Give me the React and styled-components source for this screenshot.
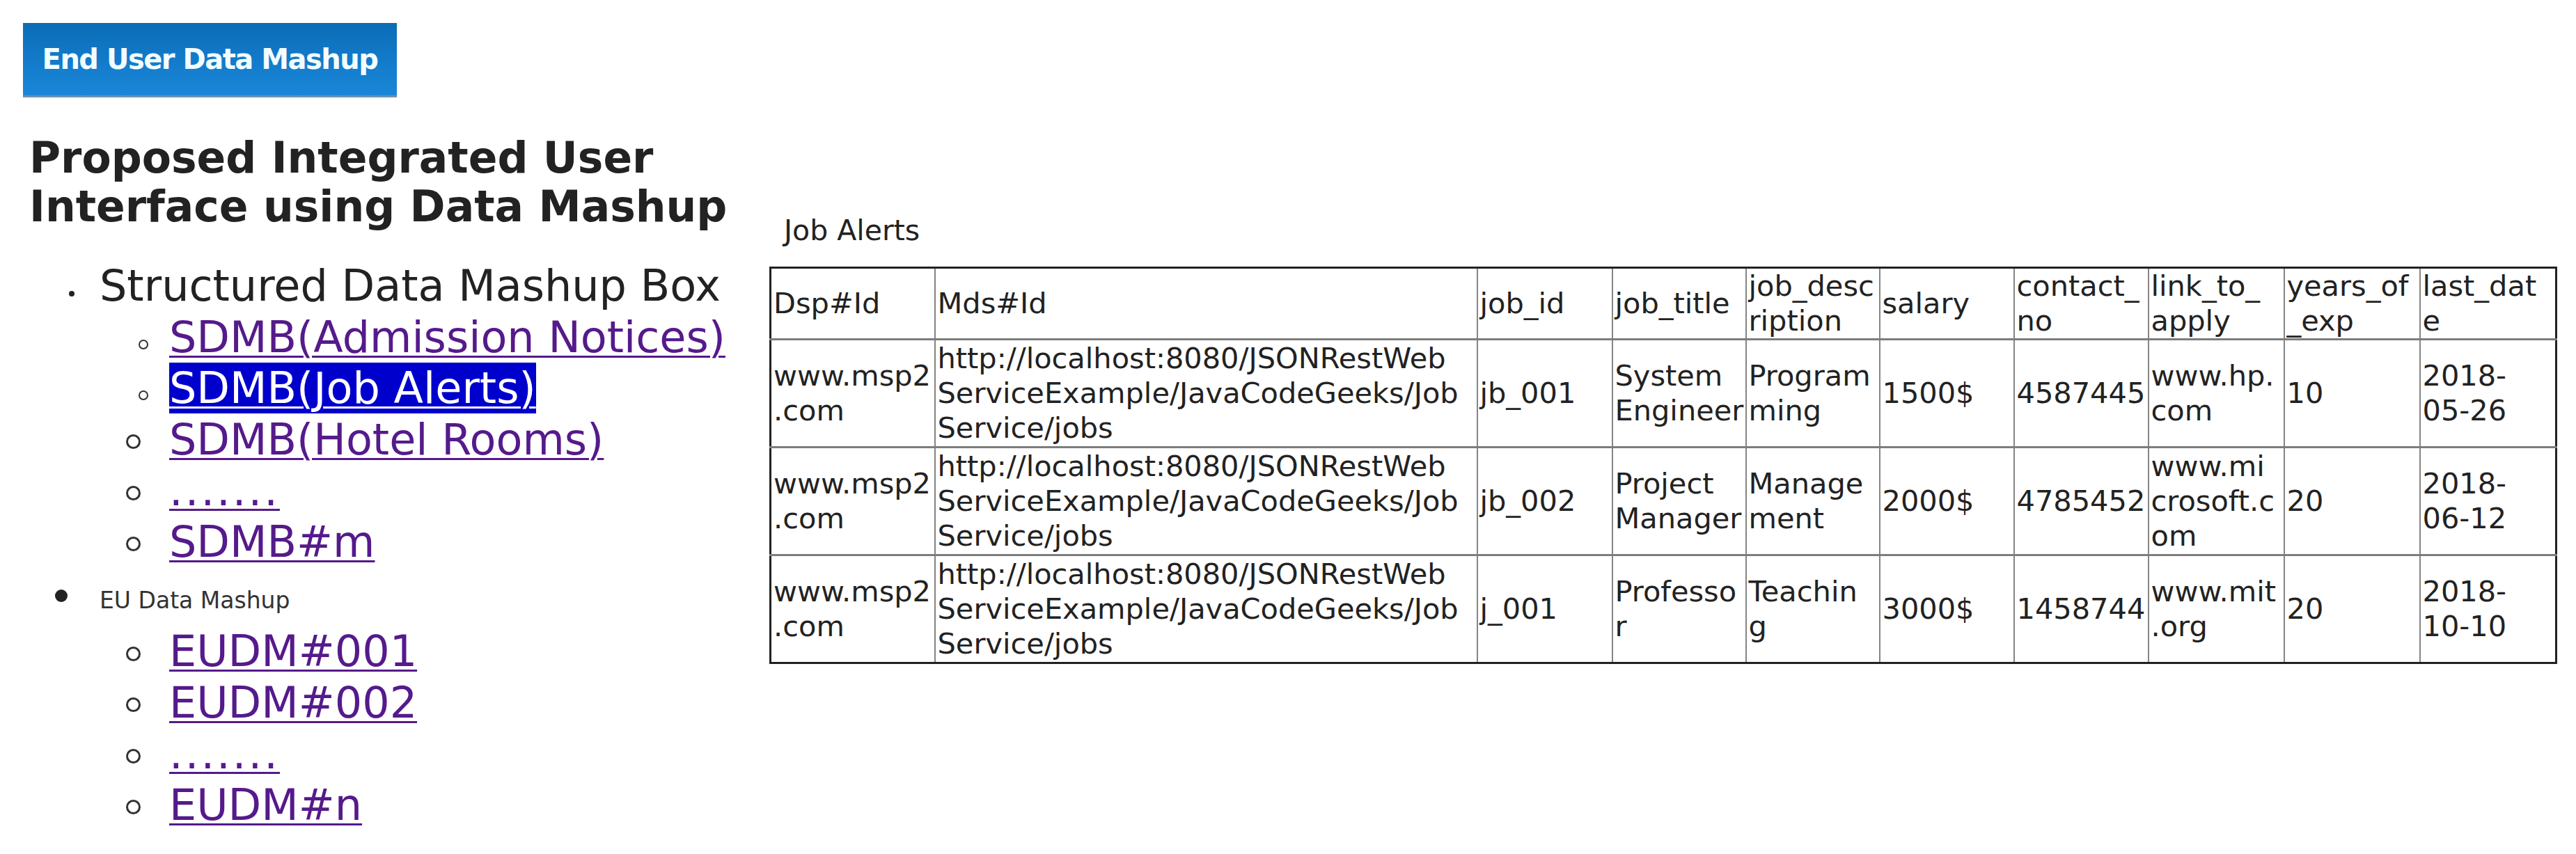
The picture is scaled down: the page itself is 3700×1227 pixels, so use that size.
import React from "react";
import styled, { createGlobalStyle, css } from "styled-components";

const GlobalStyle = createGlobalStyle`
  html, body {
    margin: 0;
    padding: 0;
    background: #fff;
  }
  body {
    font-family: "DejaVu Sans", Verdana, sans-serif;
    color: #222;
  }
`;

const Page = styled.div`
  display: flex;
  align-items: flex-start;
  width: 3700px;
  min-height: 1227px;
`;

const LeftPane = styled.div`
  flex: none;
  width: 1105px;
  padding-top: 33px;
  box-sizing: border-box;
`;

const BannerButton = styled.div`
  margin-left: 33px;
  width: 537px;
  height: 107px;
  box-sizing: border-box;
  display: flex;
  align-items: center;
  justify-content: center;
  background: linear-gradient(#0a6cb6 0%, #1279c8 45%, #1a86d8 100%);
  border-bottom: 3px solid #6a93b6;
  color: #f2fdff;
  font-weight: bold;
  font-size: 40px;
  letter-spacing: -1.5px;
  white-space: nowrap;
`;

const Title = styled.h2`
  margin: 52px 0 0 42px;
  font-size: 61.5px;
  line-height: 70px;
  font-weight: bold;
  color: #222;
`;

const Tree = styled.ul`
  list-style: none;
  margin: 42px 0 0;
  padding: 0;
`;

// marker shapes, text start per level
const markers = {
  dot: { size: 8, gap: 36, lift: 6 },
  disc: { size: 18, gap: 46, lift: 9 },
  ringSm: { size: 14, gap: 30, lift: 4, stroke: 2 },
  ring: { size: 21, gap: 41, lift: 7.5, stroke: 3 },
};
const textStart = { 1: 143, 2: 243 };

const Row = styled.li`
  font-size: 62px;
  line-height: 73.6px;
  white-space: nowrap;
  padding-left: ${(p) =>
    textStart[p.$level] - markers[p.$marker].size - markers[p.$marker].gap}px;
`;

const Marker = styled.span`
  display: inline-block;
  box-sizing: border-box;
  border-radius: 50%;
  width: ${(p) => markers[p.$kind].size}px;
  height: ${(p) => markers[p.$kind].size}px;
  margin-right: ${(p) => markers[p.$kind].gap}px;
  vertical-align: ${(p) => markers[p.$kind].lift}px;
  ${(p) =>
    markers[p.$kind].stroke
      ? css`
          border: ${markers[p.$kind].stroke}px solid #333;
          background: transparent;
        `
      : css`
          background: #222;
        `}
`;

const Label = styled.span`
  color: ${(p) => (p.$small ? "#333" : "#222")};
  font-size: ${(p) => (p.$small ? "33px" : "inherit")};
`;

const Link = styled.a`
  color: #551a8b;
  text-decoration: underline;
  text-decoration-thickness: 3px;
  text-underline-offset: 5px;
  cursor: pointer;
  letter-spacing: ${(p) => (p.$spaced ? "3px" : "normal")};
  ${(p) =>
    p.$selected &&
    css`
      background: #0000cc;
      color: #fff;
    `}
`;

const RightPane = styled.div`
  flex: none;
  padding-top: 306px;
`;

const Caption = styled.div`
  margin: 0 0 27px 21px;
  font-size: 41px;
  line-height: 50px;
  color: #222;
`;

const Table = styled.table`
  border-collapse: collapse;
  table-layout: fixed;
  width: 2565px;
  font-size: 41.5px;
  line-height: 50px;
  color: #222;

  thead th {
    border-top-color: #222;
  }
  tbody tr:last-child td {
    border-bottom-color: #222;
  }
  th:first-child,
  td:first-child {
    border-left: 3px solid #222;
  }
  th:last-child,
  td:last-child {
    border-right: 3px solid #222;
  }
`;

const Col = styled.col`
  width: ${(p) => p.$w}px;
`;

const Cell = styled.td`
  border-left: 2px solid #858585;
  border-right: 2px solid #858585;
  border-top: 3px solid #7d7d7d;
  border-bottom: 3px solid #7d7d7d;
  padding: 0 3px;
  vertical-align: middle;
  text-align: left;
  font-weight: normal;
  white-space: nowrap;
  overflow: hidden;
  height: ${(p) => (p.$head ? 100 : 152)}px;
`;

const colWidths = [236, 779, 194, 192, 192, 193, 193, 195, 195, 196];

const header = [
  "Dsp#Id",
  "Mds#Id",
  "job_id",
  "job_title",
  "job_desc\nription",
  "salary",
  "contact_\nno",
  "link_to_\napply",
  "years_of\n_exp",
  "last_dat\ne",
];

const mds =
  "http://localhost:8080/JSONRestWeb\nServiceExample/JavaCodeGeeks/Job\nService/jobs";

const rows = [
  ["www.msp2\n.com", mds, "jb_001", "System\nEngineer", "Program\nming", "1500$", "4587445", "www.hp.\ncom", "10", "2018-\n05-26"],
  ["www.msp2\n.com", mds, "jb_002", "Project\nManager", "Manage\nment", "2000$", "4785452", "www.mi\ncrosoft.c\nom", "20", "2018-\n06-12"],
  ["www.msp2\n.com", mds, "j_001", "Professo\nr", "Teachin\ng", "3000$", "1458744", "www.mit\n.org", "20", "2018-\n10-10"],
];

const Lines = ({ text }) =>
  text.split("\n").map((line, i) => (
    <React.Fragment key={i}>
      {i > 0 && <br />}
      {line}
    </React.Fragment>
  ));

const tree = [
  { level: 1, marker: "dot", text: "Structured Data Mashup Box" },
  { level: 2, marker: "ringSm", link: "SDMB(Admission Notices)" },
  { level: 2, marker: "ringSm", link: "SDMB(Job Alerts)", selected: true },
  { level: 2, marker: "ring", link: "SDMB(Hotel Rooms)" },
  { level: 2, marker: "ring", link: ".......", spaced: true },
  { level: 2, marker: "ring", link: "SDMB#m" },
  { level: 1, marker: "disc", text: "EU Data Mashup", small: true },
  { level: 2, marker: "ring", link: "EUDM#001" },
  { level: 2, marker: "ring", link: "EUDM#002" },
  { level: 2, marker: "ring", link: ".......", spaced: true },
  { level: 2, marker: "ring", link: "EUDM#n" },
];

const App = () => {
  return (
    <>
      <GlobalStyle />
      <Page>
        <LeftPane>
          <BannerButton>End User Data Mashup</BannerButton>
          <Title>
            Proposed Integrated User
            <br />
            Interface using Data Mashup
          </Title>
          <Tree>
            {tree.map((item, i) => (
              <Row key={i} $level={item.level} $marker={item.marker}>
                <Marker $kind={item.marker} />
                {item.link ? (
                  <Link $selected={item.selected} $spaced={item.spaced}>
                    {item.link}
                  </Link>
                ) : (
                  <Label $small={item.small}>{item.text}</Label>
                )}
              </Row>
            ))}
          </Tree>
        </LeftPane>

        <RightPane>
          <Caption>Job Alerts</Caption>
          <Table>
            <colgroup>
              {colWidths.map((w, i) => (
                <Col key={i} $w={w} />
              ))}
            </colgroup>
            <thead>
              <tr>
                {header.map((h, i) => (
                  <Cell as="th" key={i} $head>
                    <Lines text={h} />
                  </Cell>
                ))}
              </tr>
            </thead>
            <tbody>
              {rows.map((r, ri) => (
                <tr key={ri}>
                  {r.map((c, ci) => (
                    <Cell key={ci}>
                      <Lines text={c} />
                    </Cell>
                  ))}
                </tr>
              ))}
            </tbody>
          </Table>
        </RightPane>
      </Page>
    </>
  );
};

export default App;
